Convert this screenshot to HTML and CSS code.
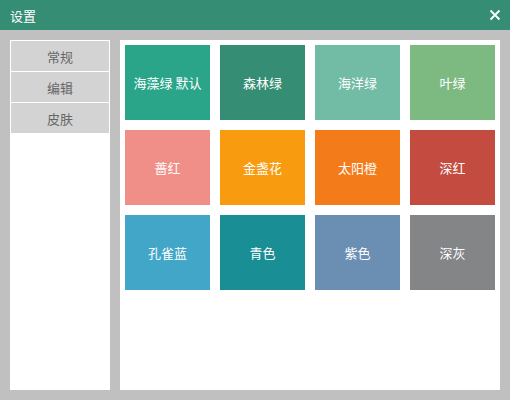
FILE: index.html
```html
<!DOCTYPE html>
<html>
<head>
<meta charset="utf-8">
<link rel="stylesheet" href="styles.css">
</head>
<body>
<div class="window">
  <div class="titlebar">
    <span class="title">设置</span>
    <svg class="close" width="12" height="12" viewBox="0 0 12 12"><path d="M1.5 1.5L10.5 10.5M10.5 1.5L1.5 10.5" stroke="#fff" stroke-width="1.8" fill="none"/></svg>
  </div>
  <div class="body">
    <div class="menu">
      <div class="item">常规</div>
      <div class="item">编辑</div>
      <div class="item">皮肤</div>
    </div>
    <div class="content">
      <div class="grid">
        <div class="tile c1">海藻绿 默认</div>
        <div class="tile c2">森林绿</div>
        <div class="tile c3">海洋绿</div>
        <div class="tile c4">叶绿</div>
        <div class="tile c5">蔷红</div>
        <div class="tile c6">金盏花</div>
        <div class="tile c7">太阳橙</div>
        <div class="tile c8">深红</div>
        <div class="tile c9">孔雀蓝</div>
        <div class="tile c10">青色</div>
        <div class="tile c11">紫色</div>
        <div class="tile c12">深灰</div>
      </div>
    </div>
  </div>
</div>
</body>
</html>
```

FILE: styles.css
```css
html, body { margin: 0; padding: 0; }
body {
  width: 510px; height: 400px; overflow: hidden;
  background: #c0c0c0;
  font-family: "Microsoft YaHei", "Noto Sans CJK SC", sans-serif;
  font-size: 13px;
}
.window { display: flex; flex-direction: column; height: 400px; }
.titlebar {
  height: 30px; background: #358d74; color: #fff;
  display: flex; align-items: center; justify-content: space-between;
  padding: 0 9px 0 10px; box-sizing: border-box;
}
.title { font-size: 13px; }
.close { display: block; }
.body {
  flex: 1; display: flex; gap: 10px;
  padding: 10px 10px 10px 10px;
}
.menu {
  width: 100px; background: #fff; box-sizing: border-box;
  padding: 1px; display: flex; flex-direction: column; gap: 1px;
}
.item {
  height: 30px; background: #d3d3d3; color: #666;
  display: flex; align-items: center; justify-content: center;
}
.content {
  width: 380px; background: #fff; padding: 5px; box-sizing: border-box;
}
.grid {
  display: grid; grid-template-columns: repeat(4, 85px);
  grid-auto-rows: 75px; gap: 10px;
}
.tile {
  color: #fff; display: flex; align-items: center; justify-content: center;
}
.c1 { background: #2aa58a; }
.c2 { background: #358d74; }
.c3 { background: #72bba4; }
.c4 { background: #7dba81; }
.c5 { background: #ef8f88; }
.c6 { background: #f89b0e; }
.c7 { background: #f47b19; }
.c8 { background: #c44b3f; }
.c9 { background: #41a6c8; }
.c10 { background: #198e94; }
.c11 { background: #6b8eb3; }
.c12 { background: #838587; }
```
